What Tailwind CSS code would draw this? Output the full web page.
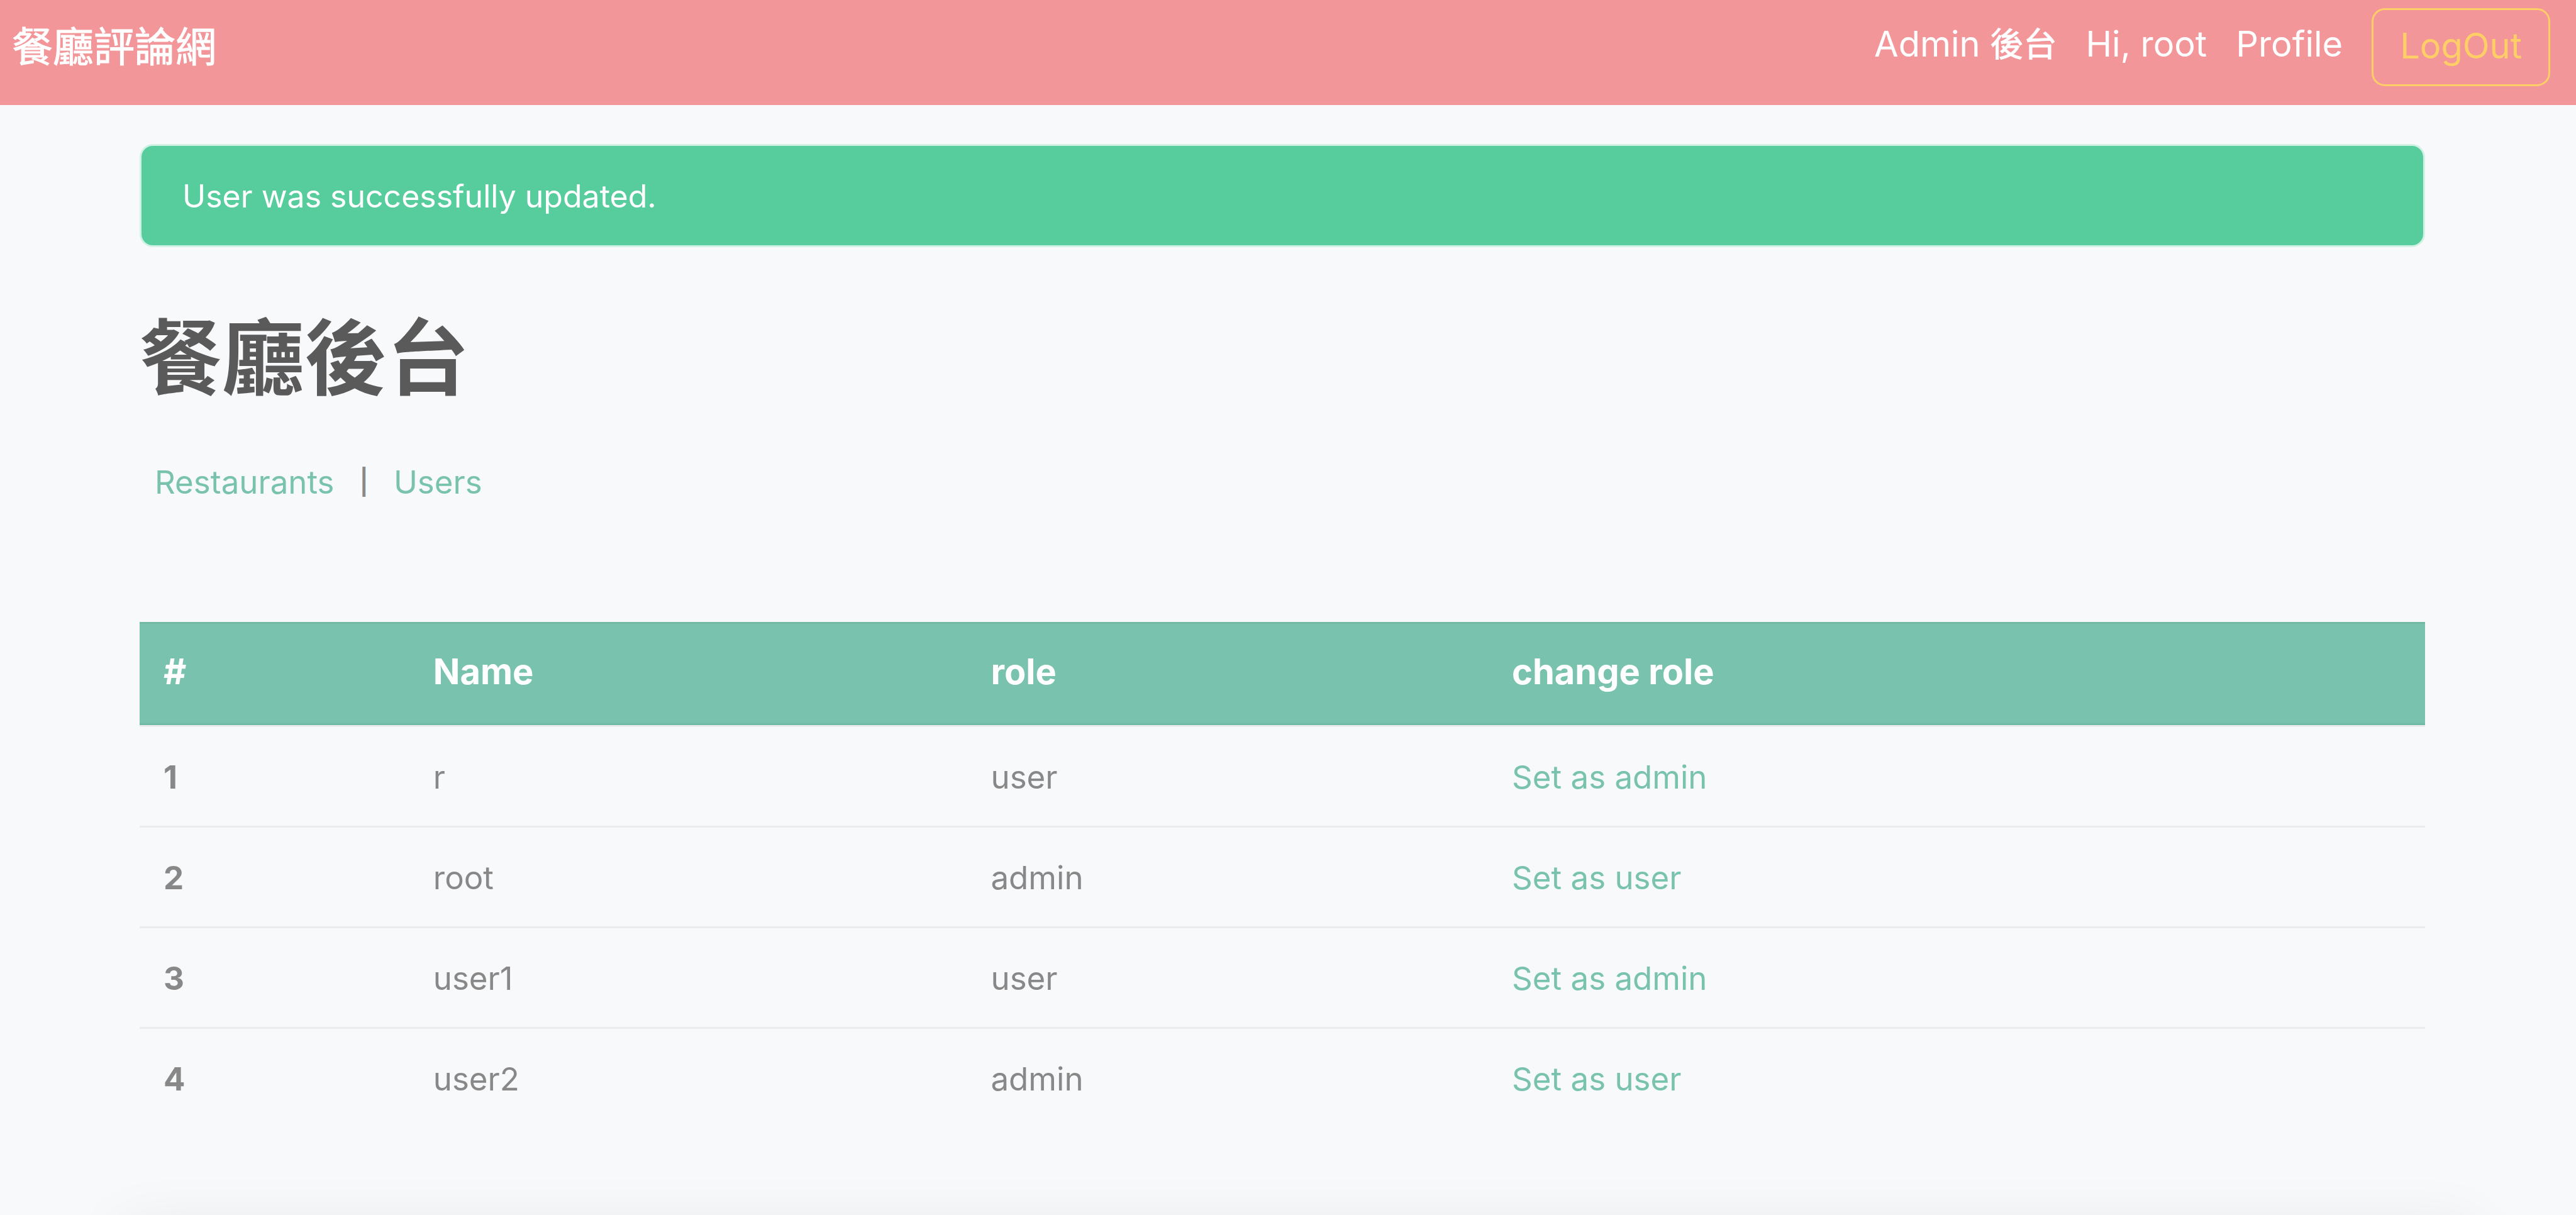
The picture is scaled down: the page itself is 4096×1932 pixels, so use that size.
<!DOCTYPE html>
<html lang="zh-Hant">
<head>
<meta charset="utf-8">
<title>餐廳評論網</title>
<script src="https://cdn.jsdelivr.net/npm/@tailwindcss/browser@4"></script>
</head>
<body class="bg-[#f8f9fb] font-['Inter','Noto_Sans_CJK_TC',sans-serif] text-[51px] leading-[80px] text-[#888888]">
<div class="flex h-screen flex-col overflow-hidden">
  <nav class="flex shrink-0 items-start justify-between bg-[#f3969a] pt-[13px] pr-[41px] pb-[30px] pl-[19px] text-white">
    <a href="#" class="text-[65px] leading-[124px] [-webkit-text-stroke:1px_white]">餐廳評論網</a>
    <div class="flex items-start gap-[46px] text-[56px] leading-[78px]">
      <a href="#" class="py-[18px]">Admin <span class="text-[53px] [-webkit-text-stroke:1px_white]">後台</span></a>
      <a href="#" class="py-[18px]">Hi, root</a>
      <a href="#" class="py-[18px]">Profile</a>
      <button type="button" class="rounded-[21px] border-3 border-[#ffce67] px-[42px] pt-[18px] pb-[22px] text-[#ffce67]">LogOut</button>
    </div>
  </nav>

  <main class="shrink-0 pt-[62px] pr-[240px] pl-[222px]">
    <div role="alert" class="rounded-[21px] border-3 border-[#d0f1e4] bg-[#57cd9e] px-[65px] pt-[40px] pb-[38px] text-[50px] text-white">User was successfully updated.</div>

    <h1 class="mt-[98px] text-[131px] leading-[157px] font-semibold text-[#5a5a5a]">餐廳後台</h1>

    <div class="mt-[79px] flex gap-[40px] px-[24px]">
      <a href="#" class="text-[#79c3ae]">Restaurants</a>
      <span class="text-[40px] font-semibold">|</span>
      <a href="#" class="text-[#79c3ae]">Users</a>
    </div>

    <table class="mt-[182px] w-full table-fixed border-separate border-spacing-0 text-left">
      <colgroup>
        <col class="w-[11.8%]">
        <col class="w-[24.4%]">
        <col class="w-[22.8%]">
        <col>
      </colgroup>
      <thead class="bg-[#79c3ae] text-[56px] text-white">
        <tr>
          <th scope="col" class="border-y-3 border-black/5 px-[38px] pt-[36px] pb-[42px]">#</th>
          <th scope="col" class="border-y-3 border-black/5 px-[38px] pt-[36px] pb-[42px]">Name</th>
          <th scope="col" class="border-y-3 border-black/5 px-[38px] pt-[36px] pb-[42px]">role</th>
          <th scope="col" class="border-y-3 border-black/5 px-[38px] pt-[36px] pb-[42px]">change role</th>
        </tr>
      </thead>
      <tbody>
        <tr>
          <th scope="row" class="border-t-3 border-black/5 px-[38px] pt-[40px] pb-[37px]">1</th>
          <td class="border-t-3 border-black/5 px-[38px] pt-[40px] pb-[37px]">r</td>
          <td class="border-t-3 border-black/5 px-[38px] pt-[40px] pb-[37px]">user</td>
          <td class="border-t-3 border-black/5 px-[38px] pt-[40px] pb-[37px]"><a href="#" class="text-[#79c3ae]">Set as admin</a></td>
        </tr>
        <tr>
          <th scope="row" class="border-t-3 border-black/5 px-[38px] pt-[40px] pb-[37px]">2</th>
          <td class="border-t-3 border-black/5 px-[38px] pt-[40px] pb-[37px]">root</td>
          <td class="border-t-3 border-black/5 px-[38px] pt-[40px] pb-[37px]">admin</td>
          <td class="border-t-3 border-black/5 px-[38px] pt-[40px] pb-[37px]"><a href="#" class="text-[#79c3ae]">Set as user</a></td>
        </tr>
        <tr>
          <th scope="row" class="border-t-3 border-black/5 px-[38px] pt-[40px] pb-[37px]">3</th>
          <td class="border-t-3 border-black/5 px-[38px] pt-[40px] pb-[37px]">user1</td>
          <td class="border-t-3 border-black/5 px-[38px] pt-[40px] pb-[37px]">user</td>
          <td class="border-t-3 border-black/5 px-[38px] pt-[40px] pb-[37px]"><a href="#" class="text-[#79c3ae]">Set as admin</a></td>
        </tr>
        <tr>
          <th scope="row" class="border-t-3 border-black/5 px-[38px] pt-[40px] pb-[37px]">4</th>
          <td class="border-t-3 border-black/5 px-[38px] pt-[40px] pb-[37px]">user2</td>
          <td class="border-t-3 border-black/5 px-[38px] pt-[40px] pb-[37px]">admin</td>
          <td class="border-t-3 border-black/5 px-[38px] pt-[40px] pb-[37px]"><a href="#" class="text-[#79c3ae]">Set as user</a></td>
        </tr>
      </tbody>
    </table>
  </main>

  <!-- Footer panel below the fold; only the top of its shadow shows -->
  <footer class="mt-[158px] mr-[161px] ml-[191px] h-40 shrink-0 bg-white shadow-[0_0_98px_rgba(0,0,0,0.07)]"></footer>
</div>
</body>
</html>
